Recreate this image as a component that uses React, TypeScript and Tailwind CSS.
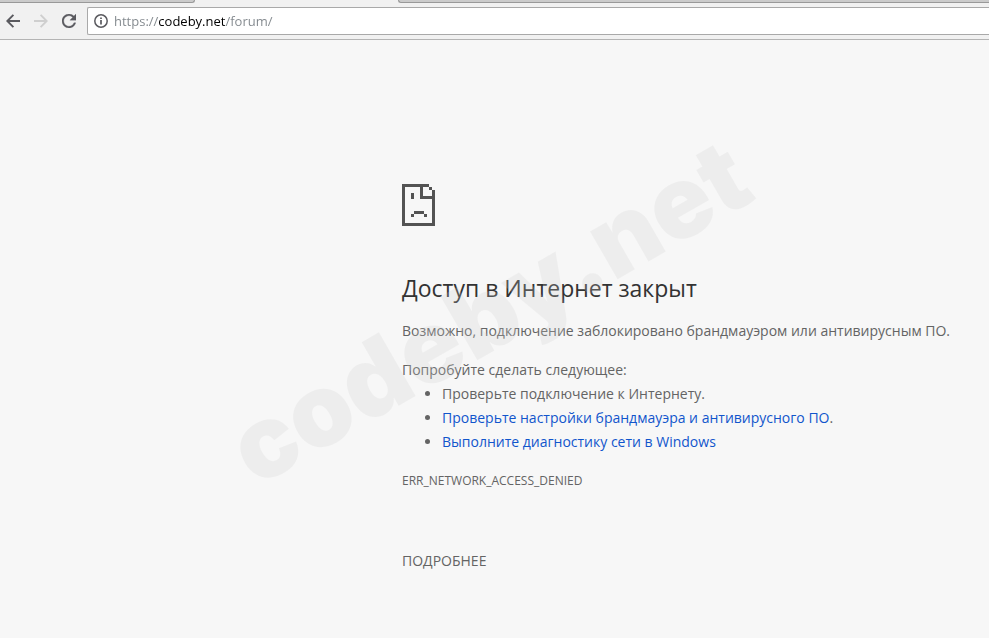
import { useState } from "react";

type Suggestion = {
  text: string;
  href?: string;
  suffix?: string;
};

const SUGGESTIONS: Suggestion[] = [
  { text: "Проверьте подключение к Интернету." },
  { text: "Проверьте настройки брандмауэра и антивирусного ПО", href: "#firewall", suffix: "." },
  { text: "Выполните диагностику сети в Windows", href: "#diagnose" },
];

function TabStrip() {
  return (
    <div className="flex h-[3px] bg-[#f1f1f1]">
      <div className="w-[195px] rounded-br-sm border-r border-b border-[#999999] bg-[#cbcbcb]" />
      <div className="w-[203px]" />
      <div className="flex-1 rounded-bl-sm border-b border-l border-[#999999] bg-[#cbcbcb]" />
    </div>
  );
}

function Toolbar() {
  const [url, setUrl] = useState("https://codeby.net/forum/");

  return (
    <div className="flex h-[37px] items-center border-b border-[#b4b4b4] bg-[#f1f1f1] pl-1.5">
      <div className="mr-[11px] flex gap-3.5">
        <button type="button" aria-label="Назад" className="text-[#5a5a5f]">
          <svg viewBox="0 0 14 14" fill="none" aria-hidden="true" className="h-3.5 w-3.5">
            <path d="M14 7H1.5M7.4 .9 1.3 7l6.1 6.1" stroke="currentColor" strokeWidth="1.9" />
          </svg>
        </button>
        <button type="button" aria-label="Вперёд" disabled className="text-[#cfcfcf]">
          <svg viewBox="0 0 14 14" fill="none" aria-hidden="true" className="h-3.5 w-3.5">
            <path d="M0 7h12.5M6.6 .9 12.7 7l-6.1 6.1" stroke="currentColor" strokeWidth="1.9" />
          </svg>
        </button>
        <button type="button" aria-label="Обновить" className="text-[#5a5a5f]">
          <svg viewBox="4 4 16 16" fill="currentColor" aria-hidden="true" className="h-3.5 w-3.5">
            <path
              d="M17.65 6.35C16.2 4.9 14.21 4 12 4c-4.42 0-7.99 3.58-7.99 8s3.57 8 7.99 8c3.73 0 6.84-2.55 7.73-6h-2.08c-.82 2.33-3.04 4-5.65 4-3.31 0-6-2.69-6-6s2.69-6 6-6c1.66 0 3.14.69 4.22 1.78L13 11h7V4l-2.35 2.35z"
              stroke="currentColor"
              strokeWidth=".3"
            />
          </svg>
        </button>
      </div>

      <div className="flex h-7 min-w-0 flex-1 items-center rounded-l-xs border border-r-0 border-[#a9a9a9] bg-white pl-1.5">
        <svg viewBox="0 0 14 14" fill="none" aria-hidden="true" className="h-3.5 w-3.5 shrink-0 text-[#5a5a5f]">
          <circle cx="7" cy="7" r="6.2" stroke="currentColor" strokeWidth="1.5" />
          <path d="M7 6.1v4.3M7 3.4v1.7" stroke="currentColor" strokeWidth="1.7" />
        </svg>
        {/* The host part is darker than the scheme and the path */}
        <input
          type="text"
          aria-label="Адресная строка"
          value={url}
          onChange={(event) => setUrl(event.target.value)}
          className="ml-1.5 min-w-0 flex-1 bg-[linear-gradient(90deg,#80868b_44px,#000000_44px,#000000_111px,#80868b_111px)] bg-clip-text text-[13px] leading-5 text-transparent outline-none"
        />
      </div>
    </div>
  );
}

function SadPageIcon() {
  return (
    <svg viewBox="0 0 33 42" fill="#535353" shapeRendering="crispEdges" aria-hidden="true" className="h-[42px] w-[33px]">
      <path d="M0 0h27v3H3v36h27V6h3v36H0z" />
      <path d="M27 3h3v3h-3zM18 3h3v9h9v3H18z" />
      <path d="M9 9h3v6H9zM12 27h10v3H12zM9 30h3v3H9zM22 30h3v3h-3z" />
    </svg>
  );
}

function Watermark() {
  return (
    <svg
      viewBox="0 0 560 370"
      aria-hidden="true"
      className="pointer-events-none absolute top-20 left-[220px] h-[370px] w-[560px] overflow-visible opacity-22"
    >
      <text
        transform="translate(36 368) rotate(-30)"
        fill="#cecece"
        className="font-[Inter,sans-serif] text-[101px] font-black"
      >
        codeby.net
      </text>
    </svg>
  );
}

export default function App() {
  const [showDetails, setShowDetails] = useState(false);

  return (
    <div className="flex min-h-screen flex-col overflow-hidden bg-[#f7f7f7] font-['Open_Sans','Noto_Sans',sans-serif]">
      <TabStrip />
      <Toolbar />

      <main className="relative flex-1 pt-36 pl-[402px] text-sm leading-6 text-[#646464]">
        <SadPageIcon />
        <h1 className="mt-[46px] text-[23px] leading-8 text-[#333333]">Доступ в Интернет закрыт</h1>
        <p className="mt-[15px] whitespace-nowrap">
          Возможно, подключение заблокировано брандмауэром или антивирусным ПО.
        </p>
        <p className="mt-[15px]">Попробуйте сделать следующее:</p>
        <ul className="list-disc pl-10">
          {SUGGESTIONS.map((item) => (
            <li key={item.text}>
              {item.href ? (
                <a href={item.href} className="text-[#1155cc]">
                  {item.text}
                </a>
              ) : (
                item.text
              )}
              {item.suffix}
            </li>
          ))}
        </ul>
        <p className="mt-[15px] text-xs leading-6">ERR_NETWORK_ACCESS_DENIED</p>
        <button
          type="button"
          aria-expanded={showDetails}
          onClick={() => setShowDetails((prev) => !prev)}
          className="mt-14 block text-sm leading-6 uppercase"
        >
          Подробнее
        </button>
        <Watermark />
      </main>
    </div>
  );
}
